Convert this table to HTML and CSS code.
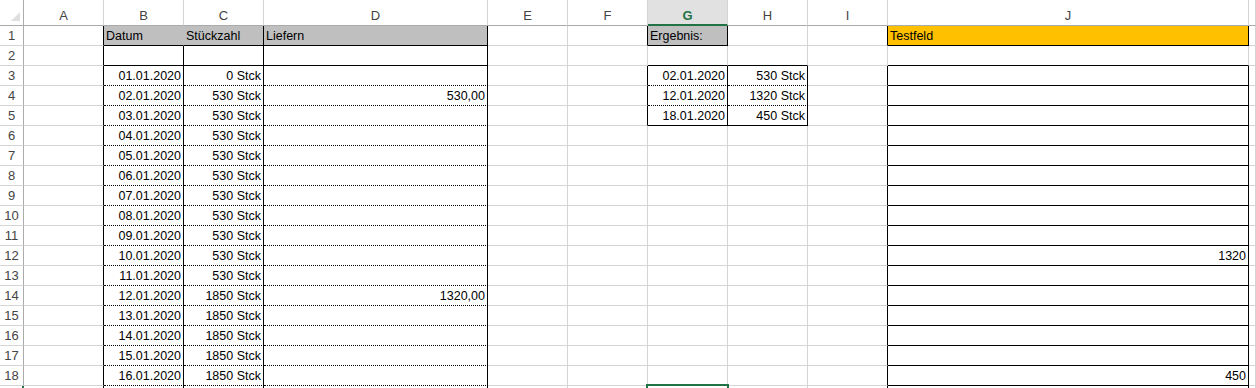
FILE: index.html
```html
<!DOCTYPE html>
<html lang="de">
<head>
<meta charset="utf-8">
<title>Tabelle</title>
<link rel="stylesheet" href="styles.css">
</head>
<body>
<div class="sheet">
  <div class="corner"><svg width="9" height="9" viewBox="0 0 9 9"><polygon points="9,0 9,9 0,9" fill="#dfdfdf"/></svg></div>
  <div class="hd">A</div><div class="hd">B</div><div class="hd">C</div><div class="hd">D</div><div class="hd">E</div><div class="hd">F</div><div class="hd hd-sel">G</div><div class="hd">H</div><div class="hd">I</div><div class="hd">J</div><div class="hd"></div>

  <div class="rh">1</div><div class="c xr"></div><div class="c gy gyj xb">Datum</div><div class="c gy xr xb">Stückzahl</div><div class="c gy xr xb">Liefern</div><div class="c"></div><div class="c xr"></div><div class="c gy xr xb">Ergebnis:</div><div class="c"></div><div class="c xr"></div><div class="c orange xr xb">Testfeld</div><div class="c"></div>

  <div class="rh">2</div><div class="c xr"></div><div class="c xr xb"></div><div class="c xr xb"></div><div class="c xr xb"></div><div class="c"></div><div class="c"></div><div class="c xb"></div><div class="c xb"></div><div class="c"></div><div class="c xb"></div><div class="c"></div>

  <div class="rh">3</div><div class="c xr"></div><div class="c r xr dt">01.01.2020</div><div class="c r xr dt">0 Stck</div><div class="c r xr dt"></div><div class="c"></div><div class="c xr"></div><div class="c r xr dt">02.01.2020</div><div class="c r xr dt">530 Stck</div><div class="c xr"></div><div class="c r xr xb"></div><div class="c"></div>

  <div class="rh">4</div><div class="c xr"></div><div class="c r xr dt">02.01.2020</div><div class="c r xr dt">530 Stck</div><div class="c r xr dt">530,00</div><div class="c"></div><div class="c xr"></div><div class="c r xr dt">12.01.2020</div><div class="c r xr dt">1320 Stck</div><div class="c xr"></div><div class="c r xr xb"></div><div class="c"></div>

  <div class="rh">5</div><div class="c xr"></div><div class="c r xr dt">03.01.2020</div><div class="c r xr dt">530 Stck</div><div class="c r xr dt"></div><div class="c"></div><div class="c xr"></div><div class="c r xr xb">18.01.2020</div><div class="c r xr xb">450 Stck</div><div class="c xr"></div><div class="c r xr xb"></div><div class="c"></div>

  <div class="rh">6</div><div class="c xr"></div><div class="c r xr dt">04.01.2020</div><div class="c r xr dt">530 Stck</div><div class="c r xr dt"></div><div class="c"></div><div class="c"></div><div class="c"></div><div class="c"></div><div class="c xr"></div><div class="c r xr xb"></div><div class="c"></div>

  <div class="rh">7</div><div class="c xr"></div><div class="c r xr dt">05.01.2020</div><div class="c r xr dt">530 Stck</div><div class="c r xr dt"></div><div class="c"></div><div class="c"></div><div class="c"></div><div class="c"></div><div class="c xr"></div><div class="c r xr xb"></div><div class="c"></div>

  <div class="rh">8</div><div class="c xr"></div><div class="c r xr dt">06.01.2020</div><div class="c r xr dt">530 Stck</div><div class="c r xr dt"></div><div class="c"></div><div class="c"></div><div class="c"></div><div class="c"></div><div class="c xr"></div><div class="c r xr xb"></div><div class="c"></div>

  <div class="rh">9</div><div class="c xr"></div><div class="c r xr dt">07.01.2020</div><div class="c r xr dt">530 Stck</div><div class="c r xr dt"></div><div class="c"></div><div class="c"></div><div class="c"></div><div class="c"></div><div class="c xr"></div><div class="c r xr xb"></div><div class="c"></div>

  <div class="rh">10</div><div class="c xr"></div><div class="c r xr dt">08.01.2020</div><div class="c r xr dt">530 Stck</div><div class="c r xr dt"></div><div class="c"></div><div class="c"></div><div class="c"></div><div class="c"></div><div class="c xr"></div><div class="c r xr xb"></div><div class="c"></div>

  <div class="rh">11</div><div class="c xr"></div><div class="c r xr dt">09.01.2020</div><div class="c r xr dt">530 Stck</div><div class="c r xr dt"></div><div class="c"></div><div class="c"></div><div class="c"></div><div class="c"></div><div class="c xr"></div><div class="c r xr xb"></div><div class="c"></div>

  <div class="rh">12</div><div class="c xr"></div><div class="c r xr dt">10.01.2020</div><div class="c r xr dt">530 Stck</div><div class="c r xr dt"></div><div class="c"></div><div class="c"></div><div class="c"></div><div class="c"></div><div class="c xr"></div><div class="c r xr xb">1320</div><div class="c"></div>

  <div class="rh">13</div><div class="c xr"></div><div class="c r xr dt">11.01.2020</div><div class="c r xr dt">530 Stck</div><div class="c r xr dt"></div><div class="c"></div><div class="c"></div><div class="c"></div><div class="c"></div><div class="c xr"></div><div class="c r xr xb"></div><div class="c"></div>

  <div class="rh">14</div><div class="c xr"></div><div class="c r xr dt">12.01.2020</div><div class="c r xr dt">1850 Stck</div><div class="c r xr dt">1320,00</div><div class="c"></div><div class="c"></div><div class="c"></div><div class="c"></div><div class="c xr"></div><div class="c r xr xb"></div><div class="c"></div>

  <div class="rh">15</div><div class="c xr"></div><div class="c r xr dt">13.01.2020</div><div class="c r xr dt">1850 Stck</div><div class="c r xr dt"></div><div class="c"></div><div class="c"></div><div class="c"></div><div class="c"></div><div class="c xr"></div><div class="c r xr xb"></div><div class="c"></div>

  <div class="rh">16</div><div class="c xr"></div><div class="c r xr dt">14.01.2020</div><div class="c r xr dt">1850 Stck</div><div class="c r xr dt"></div><div class="c"></div><div class="c"></div><div class="c"></div><div class="c"></div><div class="c xr"></div><div class="c r xr xb"></div><div class="c"></div>

  <div class="rh">17</div><div class="c xr"></div><div class="c r xr dt">15.01.2020</div><div class="c r xr dt">1850 Stck</div><div class="c r xr dt"></div><div class="c"></div><div class="c"></div><div class="c"></div><div class="c"></div><div class="c xr"></div><div class="c r xr xb"></div><div class="c"></div>

  <div class="rh">18</div><div class="c xr"></div><div class="c r xr dt">16.01.2020</div><div class="c r xr dt">1850 Stck</div><div class="c r xr dt"></div><div class="c"></div><div class="c"></div><div class="c"></div><div class="c"></div><div class="c xr"></div><div class="c r xr xb">450</div><div class="c"></div>

  <div class="rh rh-sel"></div><div class="c xr"></div><div class="c r xr dt"></div><div class="c r xr dt"></div><div class="c r xr dt"></div><div class="c"></div><div class="c"></div><div class="c"></div><div class="c"></div><div class="c xr"></div><div class="c r xr xb"></div><div class="c"></div>
</div>
<div class="selection"></div>
</body>
</html>
```
FILE: styles.css
```css
html, body {
  margin: 0;
  padding: 0;
  background: #ffffff;
  overflow: hidden;
}

body {
  position: relative;
  width: 1256px;
  height: 388px;
}

.sheet {
  display: grid;
  grid-template-columns: 24px 80px 80px 80px 224px 80px 80px 80px 80px 80px 361px 1fr;
  grid-template-rows: 26px;
  grid-auto-rows: 20px;
  font-family: "Liberation Sans", Arial, sans-serif;
  font-size: 12.5px;
  color: #000000;
}

.corner {
  box-sizing: border-box;
  border-right: 1px solid #ababab;
  border-bottom: 1px solid #ababab;
  display: flex;
  align-items: flex-end;
  justify-content: flex-end;
  padding: 0 3px 4px 0;
}

.corner svg {
  display: block;
}

.hd {
  box-sizing: border-box;
  border-right: 1px solid #d4d4d4;
  border-bottom: 1px solid #ababab;
  display: flex;
  align-items: flex-end;
  justify-content: center;
  padding-bottom: 2px;
  line-height: 14px;
  font-size: 13px;
  color: #444444;
}

.hd-sel {
  background: #e1e1e1;
  border-bottom: 2px solid #217346;
  padding-bottom: 1px;
  color: #217346;
  font-weight: bold;
}

.rh {
  box-sizing: border-box;
  border-right: 1px solid #ababab;
  border-bottom: 1px solid #d4d4d4;
  display: flex;
  align-items: flex-end;
  justify-content: center;
  padding-bottom: 2px;
  line-height: 14px;
  font-size: 13px;
  color: #444444;
}

.rh-sel {
  border-right: 2px solid #217346;
}

.c {
  box-sizing: border-box;
  border-right: 1px solid #d4d4d4;
  border-bottom: 1px solid #d4d4d4;
  display: flex;
  align-items: flex-end;
  padding: 0 2px 2px;
  line-height: 14px;
  white-space: nowrap;
  overflow: hidden;
}

.r {
  justify-content: flex-end;
}

.xr {
  border-right-color: #000000;
}

.xb {
  border-bottom: 1px solid #000000;
}

.dt {
  border-bottom: 1px dotted #000000;
}

.gy {
  background: #bfbfbf;
}

.gyj {
  border-right-color: #bfbfbf;
}

.orange {
  background: #ffc000;
}

.selection {
  position: absolute;
  left: 646px;
  top: 384px;
  width: 83px;
  height: 20px;
  box-sizing: border-box;
  border: 2px solid #217346;
}
```
